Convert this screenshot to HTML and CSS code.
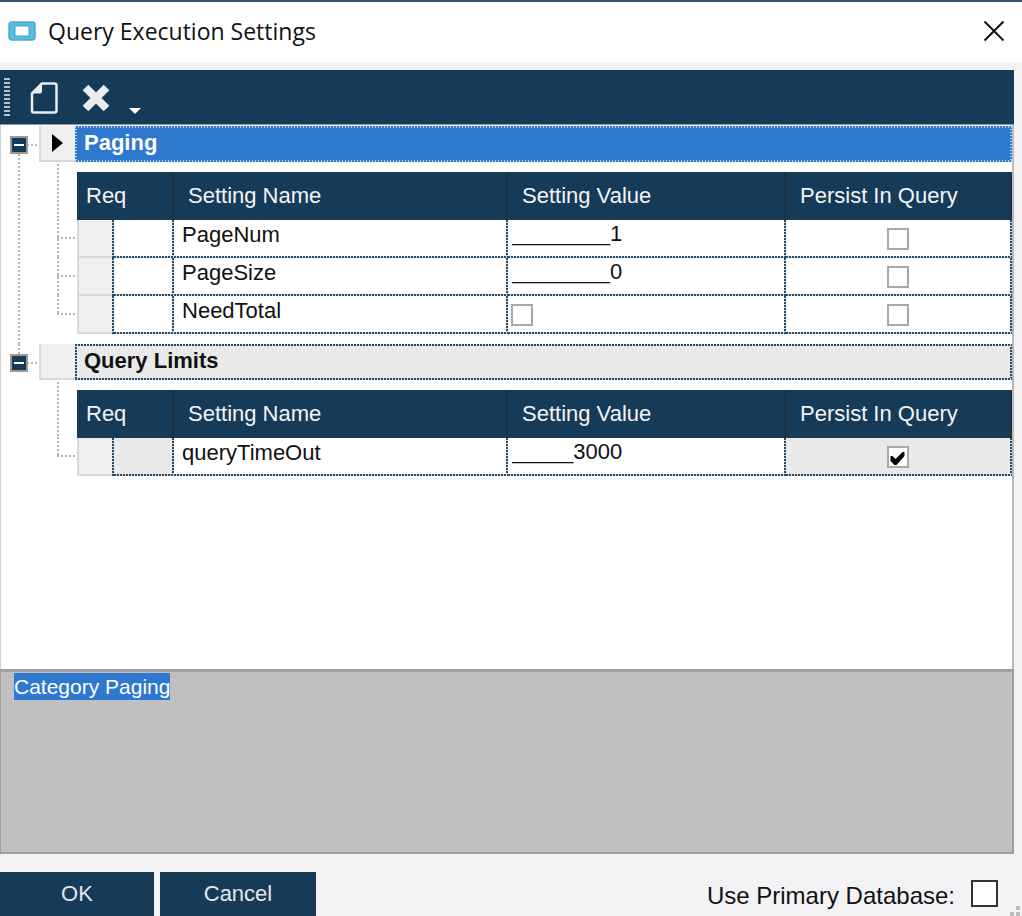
FILE: index.html
```html
<!DOCTYPE html>
<html lang="en">
<head>
    <meta charset="UTF-8">
    <meta name="viewport" content="width=device-width, initial-scale=1.0">
    <title>Query Execution Settings</title>
    <link rel="stylesheet" href="styles.css">
</head>
<body>
    <div class="dialog">
        <header class="titlebar">
            <svg class="app-icon" width="28" height="20" viewBox="0 0 28 20">
                <rect x="1" y="1" width="26" height="18" rx="3" fill="#55bce6" stroke="#4fa9d0" stroke-width="1.5"/>
                <rect x="7" y="5" width="14" height="10" fill="#fff" stroke="#4a9fc4"/>
            </svg>
            <h1>Query Execution Settings</h1>
            <button class="close" aria-label="Close">
                <svg width="22" height="22" viewBox="0 0 22 22">
                    <path d="M1.5 1.5l19 19M20.5 1.5l-19 19" stroke="#111" stroke-width="2" fill="none"/>
                </svg>
            </button>
        </header>

        <div class="toolbar">
            <span class="grip"></span>
            <button class="new" aria-label="New">
                <svg width="28" height="32" viewBox="0 0 28 32">
                    <path d="M12 1.5H24.5Q26.5 1.5 26.5 3.5V28.5Q26.5 30.5 24.5 30.5H4Q2 30.5 2 28.5V11.5Z" fill="none" stroke="#ececf0" stroke-width="2.5" stroke-linejoin="round"/>
                    <path d="M12 1.5V9Q12 11.5 9.5 11.5H2Z" fill="#ececf0"/>
                </svg>
            </button>
            <button class="delete" aria-label="Delete">
                <svg width="28" height="28" viewBox="0 0 28 28">
                    <path d="M3.5 3.5l21 21M24.5 3.5l-21 21" stroke="#ececf0" stroke-width="8" fill="none"/>
                </svg>
            </button>
            <button class="more" aria-label="More options">
                <svg width="12" height="6" viewBox="0 0 12 6"><path d="M0 0h12l-6 6z" fill="#fff"/></svg>
            </button>
        </div>

        <main class="grid">
            <section class="group">
                <div class="rail rail-first">
                    <button class="expander" aria-label="Collapse Paging"></button>
                </div>
                <div class="group-body">
                    <div class="group-row selected">
                        <span class="row-header">
                            <svg width="11" height="18" viewBox="0 0 11 18"><path d="M0 0l11 9-11 9z" fill="#000"/></svg>
                        </span>
                        <h2>Paging</h2>
                    </div>
                    <div class="detail">
                        <div class="branches">
                            <span class="branch"></span>
                            <span class="branch"></span>
                            <span class="branch"></span>
                        </div>
                        <table>
                            <colgroup>
                                <col class="col-header"><col class="col-req"><col class="col-name"><col class="col-value"><col>
                            </colgroup>
                            <thead>
                                <tr>
                                    <th colspan="2" class="req">Req</th>
                                    <th>Setting Name</th>
                                    <th>Setting Value</th>
                                    <th>Persist In Query</th>
                                </tr>
                            </thead>
                            <tbody>
                                <tr>
                                    <td class="head"></td>
                                    <td></td>
                                    <td class="name">PageNum</td>
                                    <td class="value"><input type="text" value="________1" aria-label="PageNum"></td>
                                    <td class="persist"><input type="checkbox" aria-label="Persist PageNum"></td>
                                </tr>
                                <tr>
                                    <td class="head"></td>
                                    <td></td>
                                    <td class="name">PageSize</td>
                                    <td class="value"><input type="text" value="________0" aria-label="PageSize"></td>
                                    <td class="persist"><input type="checkbox" aria-label="Persist PageSize"></td>
                                </tr>
                                <tr>
                                    <td class="head"></td>
                                    <td></td>
                                    <td class="name">NeedTotal</td>
                                    <td class="value"><input type="checkbox" aria-label="NeedTotal"></td>
                                    <td class="persist"><input type="checkbox" aria-label="Persist NeedTotal"></td>
                                </tr>
                            </tbody>
                        </table>
                    </div>
                </div>
            </section>

            <section class="group">
                <div class="rail rail-last">
                    <button class="expander" aria-label="Collapse Query Limits"></button>
                </div>
                <div class="group-body">
                    <div class="group-row">
                        <span class="row-header"></span>
                        <h2>Query Limits</h2>
                    </div>
                    <div class="detail">
                        <div class="branches">
                            <span class="branch"></span>
                        </div>
                        <table>
                            <colgroup>
                                <col class="col-header"><col class="col-req"><col class="col-name"><col class="col-value"><col>
                            </colgroup>
                            <thead>
                                <tr>
                                    <th colspan="2" class="req">Req</th>
                                    <th>Setting Name</th>
                                    <th>Setting Value</th>
                                    <th>Persist In Query</th>
                                </tr>
                            </thead>
                            <tbody>
                                <tr>
                                    <td class="head"></td>
                                    <td class="locked"></td>
                                    <td class="name">queryTimeOut</td>
                                    <td class="value"><input type="text" value="_____3000" aria-label="queryTimeOut"></td>
                                    <td class="persist locked"><input type="checkbox" aria-label="Persist queryTimeOut" checked></td>
                                </tr>
                            </tbody>
                        </table>
                    </div>
                </div>
            </section>
        </main>

        <textarea class="description" id="description" aria-label="Description" readonly>Category Paging</textarea>

        <footer class="footer">
            <button class="btn">OK</button>
            <button class="btn">Cancel</button>
            <label for="primary-db">Use Primary Database:</label>
            <input type="checkbox" id="primary-db">
            <svg class="resize" width="10" height="10" viewBox="0 0 10 10" fill="#bcbcbc">
                <rect x="6" y="0" width="4" height="4"/>
                <rect x="0" y="6" width="4" height="4"/>
                <rect x="6" y="6" width="4" height="4"/>
            </svg>
        </footer>
    </div>

    <script>
        let description = document.getElementById('description');
        description.focus();
        description.select();
    </script>
</body>
</html>
```

FILE: styles.css
```css
:root {
    --navy: #163b58;
    --blue: #2f78d0;
    --dots-x: repeating-linear-gradient(to right, #274b66 0 2px, #d3dbe2 2px 3px);
    --dots-y: repeating-linear-gradient(to bottom, #274b66 0 2px, #d3dbe2 2px 3px);
    --tree-x: repeating-linear-gradient(to right, #b4b4b4 0 2px, transparent 2px 4px);
    --tree-y: repeating-linear-gradient(to bottom, #b4b4b4 0 2px, transparent 2px 4px);
}
* {
    box-sizing: border-box;
}
body {
    margin: 0;
    background: #f3f3f6;
    color: #111;
    font-family: "Liberation Sans", Arial, sans-serif;
    font-size: 22px;
}
button {
    border: none;
    padding: 0;
    background: none;
    font: inherit;
    display: flex;
    align-items: center;
    justify-content: center;
}
svg {
    display: block;
}
.dialog {
    display: flex;
    flex-direction: column;
    min-height: 100vh;
    border-top: 2px solid #34536e;
}

/* title bar */
.titlebar {
    display: flex;
    align-items: center;
    height: 60px;
    padding: 0 17px 3px 8px;
    background: #fff;
}
.titlebar h1 {
    flex: 1;
    margin: 0 0 0 12px;
    font: 400 23px/30px "Open Sans", "Noto Sans", sans-serif;
}

/* toolbar */
.toolbar {
    display: flex;
    align-items: center;
    height: 55px;
    margin: 8px 8px 0 0;
    padding: 1px 0 0 4px;
    background: var(--navy);
    border-bottom: 1px solid #8796a3;
}
.grip {
    width: 6px;
    height: 39px;
    background: repeating-linear-gradient(to bottom, #b7c2cb 0 2px, transparent 2px 4px);
}
.new {
    margin-left: 20px;
}
.delete {
    margin-left: 24px;
}
.more {
    align-self: flex-end;
    margin: 0 0 10px 19px;
}

/* settings grid */
.grid {
    flex: 1;
    margin-right: 8px;
    padding: 1px 0 0;
    background: #fff;
    border-left: 1px solid #d4d4d4;
    border-right: 2px solid #b9b9bd;
}
.group {
    display: flex;
}
.rail {
    width: 38px;
    padding: 10px 0 0 9px;
    background-repeat: no-repeat;
}
.rail-first {
    background-image: var(--tree-x), var(--tree-y);
    background-size: 12px 2px, 2px 100%;
    background-position: 26px 18px, 17px 24px;
}
.rail-last {
    background-image: var(--tree-x), var(--tree-y);
    background-size: 12px 2px, 2px 10px;
    background-position: 26px 18px, 17px 0;
}
.expander {
    width: 18px;
    height: 18px;
    background: linear-gradient(#fff, #fff) center / 10px 2px no-repeat var(--navy);
    border: 2px solid #9a9a9a;
}
.group-body {
    flex: 1;
    padding-bottom: 10px;
}
.group-row {
    display: flex;
    height: 36px;
}
.row-header {
    display: flex;
    align-items: center;
    width: 36px;
    padding-left: 11px;
    background: #efefef;
    border-left: 2px solid #d8d8d8;
    border-bottom: 2px solid #d8d8d8;
}
.group-row h2 {
    flex: 1;
    margin: 0;
    padding-left: 9px;
    font-size: 22px;
    line-height: 34px;
    background:
        var(--dots-x) top / 100% 2px no-repeat,
        var(--dots-x) bottom / 100% 2px no-repeat,
        var(--dots-y) left / 2px 100% no-repeat,
        var(--dots-y) right / 2px 100% no-repeat,
        #e9e9e9;
}
.selected h2 {
    --dots-x: repeating-linear-gradient(to right, #bcd4ef 0 1px, var(--blue) 1px 3px);
    --dots-y: repeating-linear-gradient(to bottom, #bcd4ef 0 1px, var(--blue) 1px 3px);
    background-color: var(--blue);
    color: #fff;
}
.detail {
    display: flex;
}
.branches {
    width: 38px;
    padding: 57px 0 0 18px;
    background: var(--tree-y) 18px 2px / 2px 55px no-repeat;
}
.branch {
    display: block;
    height: 38px;
    background:
        var(--tree-x) 0 18px / 100% 2px no-repeat,
        var(--tree-y) left / 2px 100% no-repeat;
}
.branch:last-child {
    height: 20px;
}

table {
    flex: 1;
    width: 0;
    margin-top: 10px;
    table-layout: fixed;
    border-collapse: collapse;
}
.col-header {
    width: 37px;
}
.col-req {
    width: 60px;
}
.col-name {
    width: 334px;
}
.col-value {
    width: 278px;
}
th {
    height: 48px;
    padding: 0 0 0 14px;
    background: linear-gradient(#1d3040, #1d3040) right / 2px 100% no-repeat var(--navy);
    color: #f2f4f6;
    font-weight: 400;
    text-align: left;
}
th.req {
    padding-left: 9px;
}
td {
    height: 38px;
    padding: 0;
    background:
        var(--dots-x) bottom / 100% 2px no-repeat,
        var(--dots-y) right / 2px 100% no-repeat;
}
td.head {
    background:
        var(--dots-y) right / 2px 100% no-repeat,
        linear-gradient(#d8d8d8, #d8d8d8) bottom / 100% 2px no-repeat,
        linear-gradient(#d8d8d8, #d8d8d8) left / 2px 100% no-repeat,
        #efefef;
}
td.locked {
    background-color: #e9e9e9;
}
td.name {
    padding: 0 0 8px 8px;
}
td.value {
    padding-left: 4px;
}
td.persist {
    padding-right: 3px;
}
input[type="text"] {
    display: block;
    width: 260px;
    height: 28px;
    margin: 0 0 10px;
    padding: 0;
    border: none;
    background: none;
    color: inherit;
    font: inherit;
}
input[type="checkbox"] {
    appearance: none;
    display: block;
    width: 22px;
    height: 22px;
    margin: 0;
    background: #fff;
    border: 2px solid #a8a8a8;
}
.value input[type="checkbox"] {
    margin-left: -1px;
}
.persist input[type="checkbox"] {
    margin: 0 auto;
}
input[type="checkbox"]:checked::before {
    content: "";
    display: block;
    width: 18px;
    height: 18px;
    background: #000;
    clip-path: polygon(2px 8px, 4px 8px, 7px 11px, 14px 4px, 16px 4px, 16px 8px, 8px 17px, 6px 17px, 2px 13px);
}

/* description box */
.description {
    display: block;
    height: 185px;
    margin: 0 8px 0 0;
    padding: 1px 13px;
    background: #c0c0c0;
    border: 2px solid #a0a0a0;
    border-top-width: 3px;
    border-left-width: 1px;
    outline: none;
    resize: none;
    color: #111;
    font: 21px/27px "Liberation Sans", Arial, sans-serif;
}
.description::selection {
    background: var(--blue);
    color: #fff;
}

/* footer */
.footer {
    display: flex;
    align-items: center;
    gap: 6px;
    height: 44px;
    margin-top: 18px;
    padding-right: 2px;
}
.btn {
    width: 156px;
    height: 44px;
    background: var(--navy);
    color: #e3e6ea;
}
.btn:first-child {
    width: 154px;
}
.footer label {
    margin: 4px 10px 0 auto;
    font-size: 24px;
}
.footer input[type="checkbox"] {
    width: 27px;
    height: 27px;
    margin-bottom: 2px;
    border-color: #333;
}
.resize {
    align-self: flex-end;
    margin-left: 6px;
}
```
